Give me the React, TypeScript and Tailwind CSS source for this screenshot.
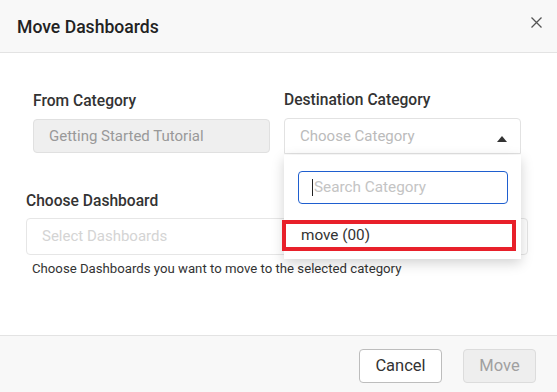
import React from "react";

export default function App() {
  return (
    <div
      className="w-[557px] h-[392px] bg-white flex flex-col overflow-hidden text-[#333]"
      style={{ fontFamily: "Roboto, 'Liberation Sans', sans-serif" }}
    >
      <div className="h-[53px] shrink-0 bg-[#f8f8f8] border-b border-[#e3e3e3] flex items-start justify-between pl-[17px] pr-[15px]">
        <div className="mt-[15px] text-[17.6px] leading-[24px] font-medium text-[#222]">Move Dashboards</div>
        <svg className="mt-[17px]" width="11" height="11" viewBox="0 0 11 11">
          <path d="M0.5 0.5 L10.5 10.5 M10.5 0.5 L0.5 10.5" stroke="#555" strokeWidth="1.3" />
        </svg>
      </div>

      <div className="flex-1 flex flex-col">
        <div className="flex pl-[33px] pt-[38px]">
          <div className="w-[237px] flex flex-col">
            <div className="text-[15.6px] leading-[20px] font-medium text-[#333]">From Category</div>
            <div className="mt-[8px] h-[34px] rounded-[4px] bg-[#efefef] border border-[#e0e0e0] flex items-center pl-[15px] text-[15px] text-[#999]">
              Getting Started Tutorial
            </div>
          </div>
          <div className="ml-[14px] w-[237px] flex flex-col relative">
            <div className="text-[15.6px] leading-[20px] font-medium text-[#333] -mt-[1px]">Destination Category</div>
            <div className="mt-[8px] h-[36px] rounded-t-[4px] bg-white border border-[#e2e2e2] flex items-center justify-between pl-[15px] pr-[13px] text-[15px] text-[#bbb]">
              <span>Choose Category</span>
              <svg width="10" height="6" viewBox="0 0 10 6" className="mt-[6px]">
                <path d="M0 6 L5 0 L10 6 Z" fill="#333" />
              </svg>
            </div>
            <div className="absolute left-0 top-[64px] w-[237px] h-[104px] bg-white shadow-[0_4px_12px_rgba(0,0,0,0.18)] z-10 flex flex-col">
              <div className="mt-[16px] ml-[14px] w-[210px] h-[33px] rounded-[4px] border border-[#1f5fcf] flex items-center pl-[13px] text-[15.3px] text-[#c4c4c4]">
                <span className="w-[1px] h-[17px] bg-[#222] mr-[1px]" />
                Search Category
              </div>
              <div className="mt-[16px] -ml-[2px] w-[234px] h-[31px] border-[4px] border-[#e8202a] flex items-center pl-[15px] text-[15.3px] text-[#333]">
                move (00)
              </div>
            </div>
          </div>
        </div>

        <div className="pl-[26px] pt-[37px] flex flex-col">
          <div className="text-[15.6px] leading-[20px] font-medium text-[#333]">Choose Dashboard</div>
          <div className="mt-[7px] w-[502px] h-[37px] rounded-[4px] border border-[#e6e6e6] flex items-center pl-[15px] text-[15px] text-[#d4d4d4]">
            Select Dashboards
          </div>
          <div className="mt-[5px] ml-[6px] text-[13.2px] leading-[17px] text-[#333]">
            Choose Dashboards you want to move to the selected category
          </div>
        </div>
      </div>

      <div className="h-[57px] shrink-0 bg-[#f8f8f8] border-t border-[#e3e3e3] flex items-start justify-end pr-[21px]">
        <button className="mt-[13px] w-[83px] h-[34px] rounded-[4px] bg-white border border-[#bdbdbd] text-[16.5px] text-[#333]">
          Cancel
        </button>
        <button className="mt-[13px] ml-[21px] w-[73px] h-[34px] rounded-[4px] bg-[#eeeeee] border border-[#dcdcdc] text-[16.5px] text-[#a0a0a0]">
          Move
        </button>
      </div>
    </div>
  );
}
